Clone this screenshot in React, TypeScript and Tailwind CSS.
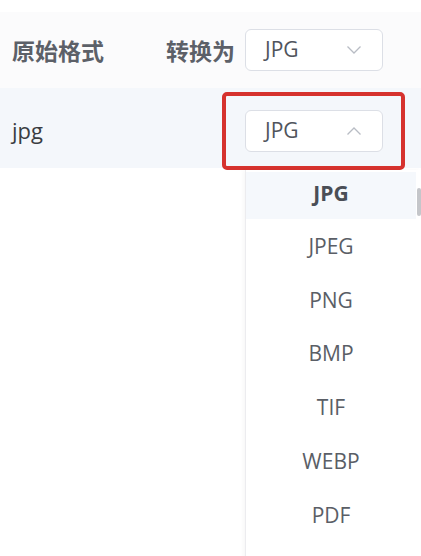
const formats = ["JPG", "JPEG", "PNG", "BMP", "TIF", "WEBP", "PDF"];

function Chevron({ up }: { up?: boolean }) {
  return (
    <svg width="16" height="10" viewBox="0 0 16 10" fill="none" stroke="#b8bcc4" strokeWidth="1.3">
      {up ? <path d="M1.5 8.5 L8 2 L14.5 8.5" /> : <path d="M1.5 1.5 L8 8 L14.5 1.5" />}
    </svg>
  );
}

function Select({ value, open }: { value: string; open?: boolean }) {
  return (
    <div className="flex h-[42px] w-[138px] items-center justify-between rounded-[6px] border border-[#dcdfe6] bg-white pl-[19px] pr-[20px]">
      <span className="text-[21px] text-[#50545c]">{value}</span>
      <Chevron up={open} />
    </div>
  );
}

export default function App() {
  return (
    <div
      className="relative h-[556px] w-[421px] overflow-hidden bg-white"
      style={{ fontFamily: '"Open Sans", "Noto Sans CJK SC", sans-serif' }}
    >
      <div className="h-[12px]" />

      {/* header row */}
      <div
        className="flex h-[76px] items-center bg-[#fbfbfc] pl-[12px]"
        style={{ fontFamily: '"Noto Sans CJK SC", sans-serif' }}
      >
        <span className="w-[154px] text-[23px] font-bold text-[#5c6068]">原始格式</span>
        <span className="mr-[10px] text-[23px] font-bold text-[#5c6068]">转换为</span>
        <div style={{ fontFamily: '"Open Sans", sans-serif' }}>
          <Select value="JPG" />
        </div>
      </div>

      {/* data row */}
      <div className="flex h-[80px] items-center bg-[#f4f7fb] pl-[12px] pt-[5px]">
        <span className="w-[233px] text-[22px] text-[#3a3d42]">jpg</span>
        <Select value="JPG" open />
      </div>

      {/* highlight box */}
      <div className="absolute left-[222px] top-[92px] h-[78px] w-[183px] rounded-[5px] border-[4px] border-[#d6322e]" />

      {/* dropdown */}
      <div className="absolute left-[245px] top-[170px] h-[400px] w-[176px] border-l border-[#ececef] bg-white shadow-[-2px_0_4px_rgba(0,0,0,0.03)]">
        <div className="flex">
          <div className="flex w-[170px] flex-col pt-[2px]">
            {formats.map((f, i) => (
              <div
                key={f}
                className={
                  i === 0
                    ? "flex h-[47px] items-center justify-center bg-[#f5f8fc] pb-[4px] text-[21px] font-bold text-[#4a4e56]"
                    : "flex h-[53.7px] items-center justify-center pt-[2px] text-[21px] text-[#5a5e66]"
                }
              >
                {f}
              </div>
            ))}
          </div>
          <div className="ml-[1px] mt-[18px] h-[28px] w-[4px] rounded-[2px] bg-[#c4c6ca]" />
        </div>
      </div>
    </div>
  );
}
